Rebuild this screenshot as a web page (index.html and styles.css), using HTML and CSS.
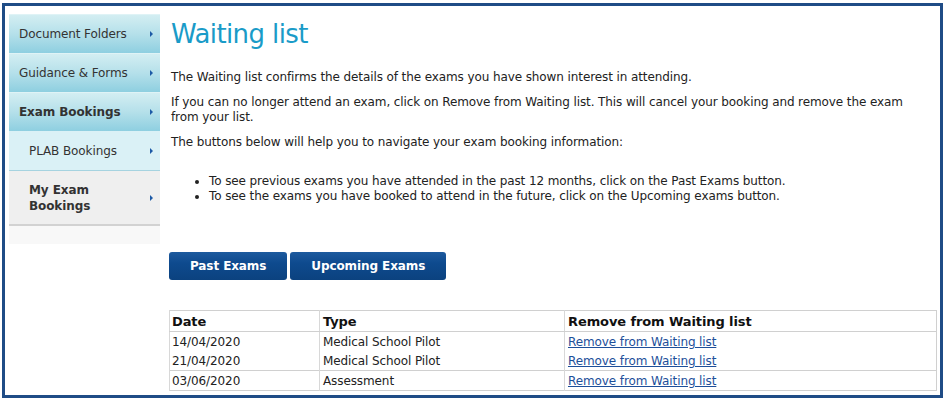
FILE: index.html
```html
<!DOCTYPE html>
<html lang="en">
<head>
<meta charset="utf-8">
<title>Waiting list</title>
<link rel="stylesheet" href="styles.css">
</head>
<body>
<div class="frame">
  <nav class="sidebar">
    <a class="nav-item top" href="#"><span>Document Folders</span><i class="arrow"></i></a>
    <a class="nav-item top" href="#"><span>Guidance &amp; Forms</span><i class="arrow"></i></a>
    <a class="nav-item top active" href="#"><span>Exam Bookings</span><i class="arrow"></i></a>
    <a class="nav-item sub" href="#"><span>PLAB Bookings</span><i class="arrow"></i></a>
    <a class="nav-item sub current" href="#"><span>My Exam<br>Bookings</span><i class="arrow"></i></a>
    <div class="nav-foot"></div>
  </nav>
  <main class="content">
    <h1 class="title">Waiting list</h1>
    <p class="text">The Waiting list confirms the details of the exams you have shown interest in attending.</p>
    <p class="text">If you can no longer attend an exam, click on Remove from Waiting list. This will cancel your booking and remove the exam from your list.</p>
    <p class="text">The buttons below will help you to navigate your exam booking information:</p>
    <ul class="bullets">
      <li>To see previous exams you have attended in the past 12 months, click on the Past Exams button.</li>
      <li>To see the exams you have booked to attend in the future, click on the Upcoming exams button.</li>
    </ul>
    <div class="buttons">
      <a class="btn" href="#">Past Exams</a>
      <a class="btn" href="#">Upcoming Exams</a>
    </div>
    <table class="list">
      <colgroup>
        <col class="c-date">
        <col class="c-type">
        <col class="c-remove">
      </colgroup>
      <thead>
        <tr><th>Date</th><th>Type</th><th>Remove from Waiting list</th></tr>
      </thead>
      <tbody>
        <tr class="r1"><td>14/04/2020</td><td>Medical School Pilot</td><td><a href="#">Remove from Waiting list</a></td></tr>
        <tr class="r2"><td>21/04/2020</td><td>Medical School Pilot</td><td><a href="#">Remove from Waiting list</a></td></tr>
        <tr class="r3"><td>03/06/2020</td><td>Assessment</td><td><a href="#">Remove from Waiting list</a></td></tr>
      </tbody>
    </table>
  </main>
</div>
</body>
</html>
```
FILE: styles.css
```css
html, body {
  margin: 0;
  padding: 0;
  background: #ffffff;
}
body {
  font-family: "DejaVu Sans", Verdana, sans-serif;
  font-size: 12px;
  letter-spacing: -0.1px;
  color: #222222;
}
.frame {
  box-sizing: border-box;
  margin: 3px 4px 0 2px;
  height: 395px;
  border: 3px solid #1f4c86;
  display: flex;
  padding: 8px 3px 0 4px;
  gap: 9px;
}
.sidebar {
  width: 151px;
  flex: none;
  display: flex;
  flex-direction: column;
}
.nav-item {
  display: flex;
  align-items: center;
  justify-content: space-between;
  text-decoration: none;
  color: #333333;
  box-sizing: border-box;
  padding-right: 7px;
}
.nav-item.top {
  height: 39px;
  padding-left: 10px;
  background: linear-gradient(to bottom, #d3eef2 0%, #b5e0ea 50%, #8ecfe0 100%);
  border-top: 1px solid #dff3f6;
}
.nav-item.active span {
  font-weight: bold;
}
.nav-item.sub {
  padding-left: 20px;
}
.nav-item.sub:not(.current) {
  height: 40px;
  background: #daf1f6;
  border-bottom: 1px solid #a6d3e0;
}
.nav-item.current {
  height: 55px;
  background: #efefef;
  border-bottom: 2px solid #d2d2d2;
  font-weight: bold;
  line-height: 16px;
}
.arrow {
  width: 0;
  height: 0;
  border-top: 3px solid transparent;
  border-bottom: 3px solid transparent;
  border-left: 3px solid #1d5aa6;
}
.nav-foot {
  height: 18px;
  background: #f8f8f8;
}
.content {
  flex: 1;
  min-width: 0;
}
.title {
  margin: 4px 0 19px 2px;
  font-size: 26px;
  line-height: 33px;
  letter-spacing: -0.6px;
  font-weight: normal;
  color: #1a9bc8;
}
.text {
  margin: 0 24px 10px 2px;
  line-height: 15px;
}
.bullets {
  margin: 24px 0 0;
  padding-left: 40px;
  line-height: 15px;
}
.buttons {
  display: flex;
  gap: 3px;
  margin-top: 48px;
}
.btn {
  height: 28px;
  line-height: 28px;
  padding: 0 21px;
  border-radius: 3px;
  background: linear-gradient(to bottom, #1d5a9e 0%, #0e4a8e 40%, #0b427f 100%);
  color: #ffffff;
  font-weight: bold;
  text-decoration: none;
}
.list {
  margin-top: 30px;
  width: 768px;
  border-collapse: collapse;
  table-layout: fixed;
  border: 1px solid #d0d0d0;
}
.c-date { width: 150px; }
.c-type { width: 245px; }
.list th, .list td {
  text-align: left;
  padding: 0 3px;
  border-left: 1px solid #d8d8d8;
}
.list th:first-child, .list td:first-child {
  padding-left: 2px;
}
.list th {
  font-size: 13px;
  height: 20px;
  color: #111111;
  border-bottom: 1px solid #d0d0d0;
}
.list td {
  height: 19px;
}
.list .r3 td {
  border-top: 1px solid #d0d0d0;
}
.list a {
  color: #1d4f9a;
}
```
